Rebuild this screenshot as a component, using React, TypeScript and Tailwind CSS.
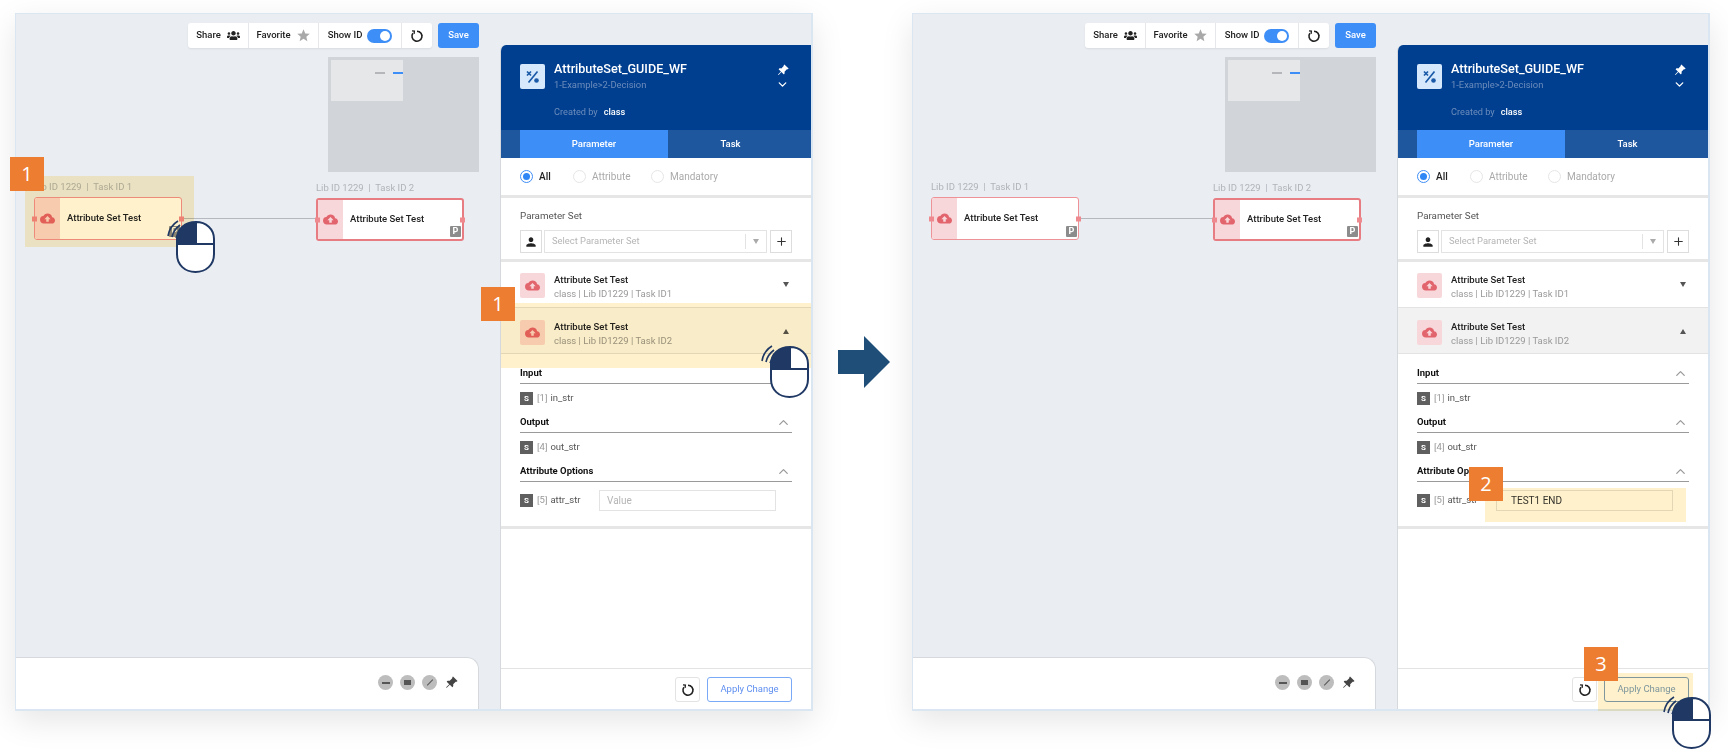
import React from 'react';
import { ChevronDown, ChevronUp, Plus } from 'lucide-react';
import { BsPinAngleFill } from 'react-icons/bs';
import { FaUsers } from 'react-icons/fa';
import { MdCloudUpload, MdPerson, MdStar } from 'react-icons/md';

const RefreshIcon = ({ size = 16 }: { size?: number }) => (
  <svg width={size} height={size} viewBox="0 0 16 16" fill="none" stroke="#222" strokeWidth="1.8">
    <path d="M8 2.500a5.700 5.700 0 1 1-4.700 2.400" />
    <path d="M2.300 2.200l2.700.3-.3 3" strokeWidth="1.500" />
    <path d="M10.600 3l.7.5M12.700 5l.4.8M13.700 7.500v.6" strokeWidth="1.300" />
  </svg>
);

const MouseIcon = ({ className }: { className: string }) => (
  <svg className={className} width="48" height="56" viewBox="0 0 48 56" fill="none">
    <path d="M1 18c1-6 5-12 10-15M5 19c1-5 4-9 8-12M9 20c1-3 2-5 5-8" stroke="#1f3864" strokeWidth="1.6" />
    <path d="M28 4c-7 0-18 4-18 16v6h19V4z" fill="#1f3864" />
    <path d="M29 4c10 0 18 7 18 16v6H29z" fill="#fff" />
    <path d="M10 26h37v10c0 11-8 18-18.500 18S10 47 10 36z" fill="#fff" />
    <path d="M29 4c-11 0-19 7-19 17v15c0 11 8 18 18.500 18S47 47 47 36V21C47 11 39 4 29 4zM10 26h37M29 4v22" stroke="#1f3864" strokeWidth="2" />
  </svg>
);

const StepBadge = ({ n, className }: { n: number; className: string }) => (
  <div className={`absolute z-30 flex h-[34px] w-[34px] items-center justify-center bg-[#ed7d31] text-[20px] text-white font-['Open_Sans',sans-serif] ${className}`}>
    {n}
  </div>
);

// multiply keeps the text under the yellow marker dark
const Highlight = ({ className }: { className: string }) => (
  <div className={`absolute z-20 bg-[#fef1cc] mix-blend-multiply ${className}`} />
);

const TaskNode = ({ task, thick, className }: { task: number; thick?: boolean; className: string }) => (
  <div className={`absolute w-[148px] ${className}`}>
    <div className="mb-[3px] h-[14px] text-[9.500px] leading-[14px] whitespace-pre text-[#b0b3b8]">{`Lib ID 1229  |  Task ID ${task}`}</div>
    <div className={`relative flex h-[43px] rounded-[3px] bg-white ${thick ? 'border-2 border-[#e87c83]' : 'border border-[#ee9298]'}`}>
      <div className={`flex w-[25px] items-center justify-center bg-[#f8d7da] ${thick ? 'rounded-l-[1px]' : 'rounded-l-[2px]'}`}>
        <MdCloudUpload className="text-[15px] text-[#e2646d]" />
      </div>
      <div className="flex flex-1 items-center pl-[7px] text-[9.500px] font-medium text-[#222]">Attribute Set Test</div>
      <div className="absolute right-[1px] bottom-[2px] flex h-[11px] w-[11px] items-center justify-center rounded-[1px] bg-[#8c8c8c] text-[9px] font-bold text-white">P</div>
      <div className="absolute top-1/2 -left-[3px] h-[5px] w-[5px] -translate-y-1/2 bg-[#ee8a8f]" />
      <div className="absolute top-1/2 -right-[3px] h-[5px] w-[5px] -translate-y-1/2 bg-[#ee8a8f]" />
    </div>
  </div>
);

const Toolbar = () => (
  <div className="mt-[9px] mr-[21px] flex justify-end gap-[6px]">
    <div className="flex h-[25px] items-stretch rounded-[3px] bg-white text-[9.500px] font-medium text-[#222] shadow-[0_1px_2px_rgba(0,0,0,0.08)]">
      <div className="flex w-[61px] items-center justify-center gap-[6px] border-r border-[#e5e7ea]">
        Share <FaUsers className="text-[13px]" />
      </div>
      <div className="flex w-[70px] items-center justify-center gap-[5px] border-r border-[#e5e7ea]">
        Favorite <MdStar className="text-[15px] text-[#a9a9a9]" />
      </div>
      <div className="flex w-[83px] items-center justify-center gap-[5px] border-r border-[#e5e7ea]">
        Show ID
        <div className="flex h-[14px] w-[25px] items-center justify-end rounded-full bg-[#3e8ef7] pr-[2px]">
          <div className="h-[10px] w-[10px] rounded-full bg-white" />
        </div>
      </div>
      <div className="flex w-[30px] items-center justify-center">
        <RefreshIcon size={14} />
      </div>
    </div>
    <div className="flex h-[25px] w-[41px] items-center justify-center rounded-[3px] bg-[#3e8ef7] text-[9.500px] font-medium text-white">Save</div>
  </div>
);

const Minimap = () => (
  <div className="mt-[9px] mr-[21px] h-[115px] w-[151px] self-end bg-[#d1d5da] pt-[3px] pl-[3px]">
    <div className="flex h-[41px] w-[72px] items-start justify-end gap-[8px] bg-[#e6e7e9] pt-[12px]">
      <div className="h-[2px] w-[10px] bg-[#b4b6b9]" />
      <div className="h-[2px] w-[10px] bg-[#3e8ef7]" />
    </div>
  </div>
);

const BottomBar = () => (
  <div className="mt-auto flex h-[52px] w-[463px] items-center justify-end gap-[7px] rounded-tr-[12px] border-t border-r border-[#d5d8dc] bg-white pr-[20px] pb-[2px]">
    <div className="flex h-[15px] w-[15px] items-center justify-center rounded-full bg-[#bdbdbd]">
      <div className="h-[2px] w-[8px] bg-[#555]" />
    </div>
    <div className="flex h-[15px] w-[15px] items-center justify-center rounded-full bg-[#bdbdbd]">
      <div className="h-[5px] w-[7px] bg-[#555]" />
    </div>
    <div className="flex h-[15px] w-[15px] items-center justify-center rounded-full bg-[#bdbdbd]">
      <div className="h-[1px] w-[8px] -rotate-45 bg-[#555]" />
    </div>
    <BsPinAngleFill className="ml-[1px] text-[13px] text-[#444]" />
  </div>
);

const Radio = ({ label, checked, className }: { label: string; checked?: boolean; className: string }) => (
  <div className={`flex items-center gap-[6px] ${className}`}>
    <div className={`flex h-[13px] w-[13px] items-center justify-center rounded-full border ${checked ? 'border-[#3e8ef7]' : 'border-[#e6e6e6]'}`}>
      {checked && <div className="h-[7px] w-[7px] rounded-full bg-[#2f86f5]" />}
    </div>
    <span className={checked ? 'font-medium text-[#222]' : 'text-[#aaa]'}>{label}</span>
  </div>
);

const AttrItem = ({ task, open, marked }: { task: number; open?: boolean; marked?: boolean }) => (
  <div className={`flex items-start pl-[19px] ${open ? `h-[47px] border-y border-[#e3e3e3] pt-[12px] ${marked ? 'bg-[#fafafa]' : 'bg-[#f2f2f2]'}` : 'h-[45px] pt-[11px]'}`}>
    <div className="flex h-[25px] w-[25px] items-center justify-center rounded-[2px] bg-[#f8d7da]">
      <MdCloudUpload className="text-[15px] text-[#e2646d]" />
    </div>
    <div className="ml-[9px] flex-1">
      <div className="text-[9.500px] leading-[14px] font-medium text-[#222]">Attribute Set Test</div>
      <div className="text-[9.500px] leading-[14px] whitespace-pre text-[#999]">{`class | Lib ID1229 | Task ID${task}`}</div>
    </div>
    <div
      className={`mt-[9px] mr-[22px] h-0 w-0 border-x-[3.500px] border-x-transparent ${open ? 'border-b-[5px] border-b-[#555]' : 'border-t-[5px] border-t-[#555]'}`}
    />
  </div>
);

const SectionTitle = ({ title }: { title: string }) => (
  <div className="flex h-[20px] items-center justify-between border-b border-[#9a9a9a] pb-[1px] text-[9.500px] font-bold text-[#111]">
    {title}
    <ChevronUp className="mr-[1px] h-[15px] w-[15px] text-[#999]" />
  </div>
);

const ParamLabel = ({ idx, name }: { idx: number; name: string }) => (
  <div className="flex items-center text-[9.500px]">
    <span className="mr-[4px] flex h-[13px] w-[13px] items-center justify-center bg-[#5f5f5f] text-[8px] font-bold text-white">S</span>
    <span className="mr-[3px] text-[#999]">[{idx}]</span>
    <span className="text-[#555]">{name}</span>
  </div>
);

const ParamRow = ({ idx, name }: { idx: number; name: string }) => (
  <div className="flex h-[29px] items-center">
    <ParamLabel idx={idx} name={name} />
  </div>
);

const SidePanel = ({ value, pressed, marked }: { value?: string; pressed?: boolean; marked?: boolean }) => (
  <div className="mt-[31px] flex w-[311px] flex-col overflow-hidden rounded-tl-[6px] border-l border-[#d5d8dc] bg-white">
    <div className="relative h-[85px] bg-[#003f8f] pt-[19px] pl-[19px]">
      <div className="flex">
        <div className="flex h-[25px] w-[25px] items-center justify-center rounded-[2px] bg-[#d6e8fb]">
          <svg width="14" height="14" viewBox="0 0 14 14" stroke="#1a5aa8" strokeWidth="1.700" fill="#1a5aa8">
            <path d="M1 1.500l4 4M5 1.500l-4 4M11.500 1.500l-9 11" />
            <circle cx="10.500" cy="10.500" r="2.300" stroke="none" />
          </svg>
        </div>
        <div className="-mt-[4px] ml-[9px]">
          <div className="text-[12.600px] leading-[17px] font-medium text-white">AttributeSet_GUIDE_WF</div>
          <div className="mt-[1px] text-[9.400px] leading-[13px] text-[#6c8cbc]">1-Example&gt;2-Decision</div>
        </div>
      </div>
      <div className="mt-[14px] ml-[34px] flex items-center gap-[6px] text-[9.200px]">
        <span className="text-[#6c8cbc]">Created by</span>
        <span className="font-medium text-white">class</span>
      </div>
      <div className="absolute top-[19px] right-[22px] flex flex-col items-center text-white">
        <BsPinAngleFill className="text-[12px]" />
        <ChevronDown className="mt-[2px] h-[13px] w-[13px]" strokeWidth={2.5} />
      </div>
    </div>

    <div className="flex h-[28px] bg-[#1f579f] pl-[19px] text-[9.500px] font-medium text-white">
      <div className="flex w-[148px] items-center justify-center bg-[#3e8ef7]">Parameter</div>
      <div className="flex w-[125px] items-center justify-center">Task</div>
    </div>

    <div className="flex h-[40px] items-center border-b-[3px] border-[#e6e6e6] pl-[19px] text-[10px]">
      <Radio label="All" checked className="w-[53px]" />
      <Radio label="Attribute" className="w-[78px]" />
      <Radio label="Mandatory" className="w-[90px]" />
    </div>

    <div className="h-[64px] border-b-[3px] border-[#e6e6e6] px-[19px] pt-[11px]">
      <div className="text-[9.800px] leading-[14px] text-[#555]">Parameter Set</div>
      <div className="mt-[7px] flex h-[23px] gap-[2px]">
        <div className="flex w-[22px] items-center justify-center border border-[#ddd]">
          <MdPerson className="text-[14px] text-[#222]" />
        </div>
        <div className="flex flex-1 items-center border border-[#e3e3e3] pl-[7px] text-[9.400px] text-[#b5b5b5]">
          <span className="flex-1">Select Parameter Set</span>
          <div className="flex h-[15px] w-[21px] items-center justify-center border-l border-[#e3e3e3]">
            <div className="h-0 w-0 border-x-[3.500px] border-t-[5px] border-x-transparent border-t-[#aaa]" />
          </div>
        </div>
        <div className="ml-[1px] flex w-[22px] items-center justify-center border border-[#ddd]">
          <Plus className="h-[13px] w-[13px] text-[#333]" />
        </div>
      </div>
    </div>

    <AttrItem task={1} />
    <AttrItem task={2} open marked={marked} />

    <div className="h-[175px] border-b-[3px] border-[#e6e6e6] px-[19px] pt-[10px]">
      <SectionTitle title="Input" />
      <ParamRow idx={1} name="in_str" />
      <SectionTitle title="Output" />
      <ParamRow idx={4} name="out_str" />
      <SectionTitle title="Attribute Options" />
      <div className="mt-[8px] flex h-[21px] items-center justify-between pr-[16px]">
        <ParamLabel idx={5} name="attr_str" />
        <div className={`flex h-[21px] w-[177px] items-center border border-[#e3e3e3] text-[10px] ${value ? 'pl-[14px] text-[#333]' : 'pl-[7px] text-[#b5b5b5]'}`}>
          {value ?? 'Value'}
        </div>
      </div>
    </div>

    <div className="mt-auto flex h-[41px] justify-end gap-[7px] border-t border-[#e3e3e3] pt-[8px] pr-[19px]">
      <div className="flex h-[25px] w-[25px] items-center justify-center rounded-[3px] border border-[#e3e3e3]">
        <RefreshIcon size={14} />
      </div>
      <div className={`flex h-[25px] w-[85px] items-center justify-center rounded-[3px] border text-[9.500px] ${pressed ? 'border-[#7f9fc3] text-[#7f9fc3]' : 'border-[#7aa9f7] text-[#5f8ff0]'}`}>
        Apply Change
      </div>
    </div>
  </div>
);

const EditorWindow = ({ children, value, pressed, marked }: { children: React.ReactNode; value?: string; pressed?: boolean; marked?: boolean }) => (
  <div className="relative flex h-[698px] w-[798px] shrink-0 border-t border-r-2 border-b-2 border-l border-[#dbe6f3] bg-[#eaeef3] shadow-[0_10px_30px_rgba(0,0,0,0.1)]">
    <div className="relative flex flex-1 flex-col">
      <Toolbar />
      <Minimap />
      <div className="absolute top-[204px] left-[162px] h-[1px] w-[137px] bg-[#b5b9bf]" />
      <TaskNode task={1} className="top-[166px] left-[18px]" />
      <TaskNode task={2} thick className="top-[167px] left-[300px]" />
      <BottomBar />
    </div>
    <SidePanel value={value} pressed={pressed} marked={marked} />
    {children}
  </div>
);

export default function App() {
  return (
    <div className="flex h-[752px] w-[1728px] items-start overflow-hidden bg-white pt-[13px] pl-[15px] font-['Roboto',sans-serif]">
      <EditorWindow marked>
        <Highlight className="top-[162px] left-[9px] h-[71px] w-[169px]" />
        <StepBadge n={1} className="top-[143px] -left-[6px]" />
        <MouseIcon className="absolute top-[204px] left-[151px] z-30" />
        <Highlight className="top-[289px] left-[485px] h-[65px] w-[310px]" />
        <StepBadge n={1} className="top-[273px] left-[465px]" />
        <MouseIcon className="absolute top-[329px] left-[745px] z-30" />
      </EditorWindow>

      <div className="flex h-[698px] w-[99px] shrink-0 items-center justify-center pl-[3px]">
        <svg width="52" height="52" viewBox="0 0 52 52">
          <path d="M0 14h26V0l26 26-26 26V38H0z" fill="#1f4e79" />
        </svg>
      </div>

      <EditorWindow value="TEST1 END" pressed>
        <Highlight className="top-[474px] left-[572px] h-[34px] w-[201px]" />
        <StepBadge n={2} className="top-[453px] left-[556px]" />
        <Highlight className="top-[659px] left-[685px] h-[38px] w-[95px]" />
        <StepBadge n={3} className="top-[633px] left-[671px]" />
        <MouseIcon className="absolute top-[680px] left-[750px] z-30" />
      </EditorWindow>
    </div>
  );
}
